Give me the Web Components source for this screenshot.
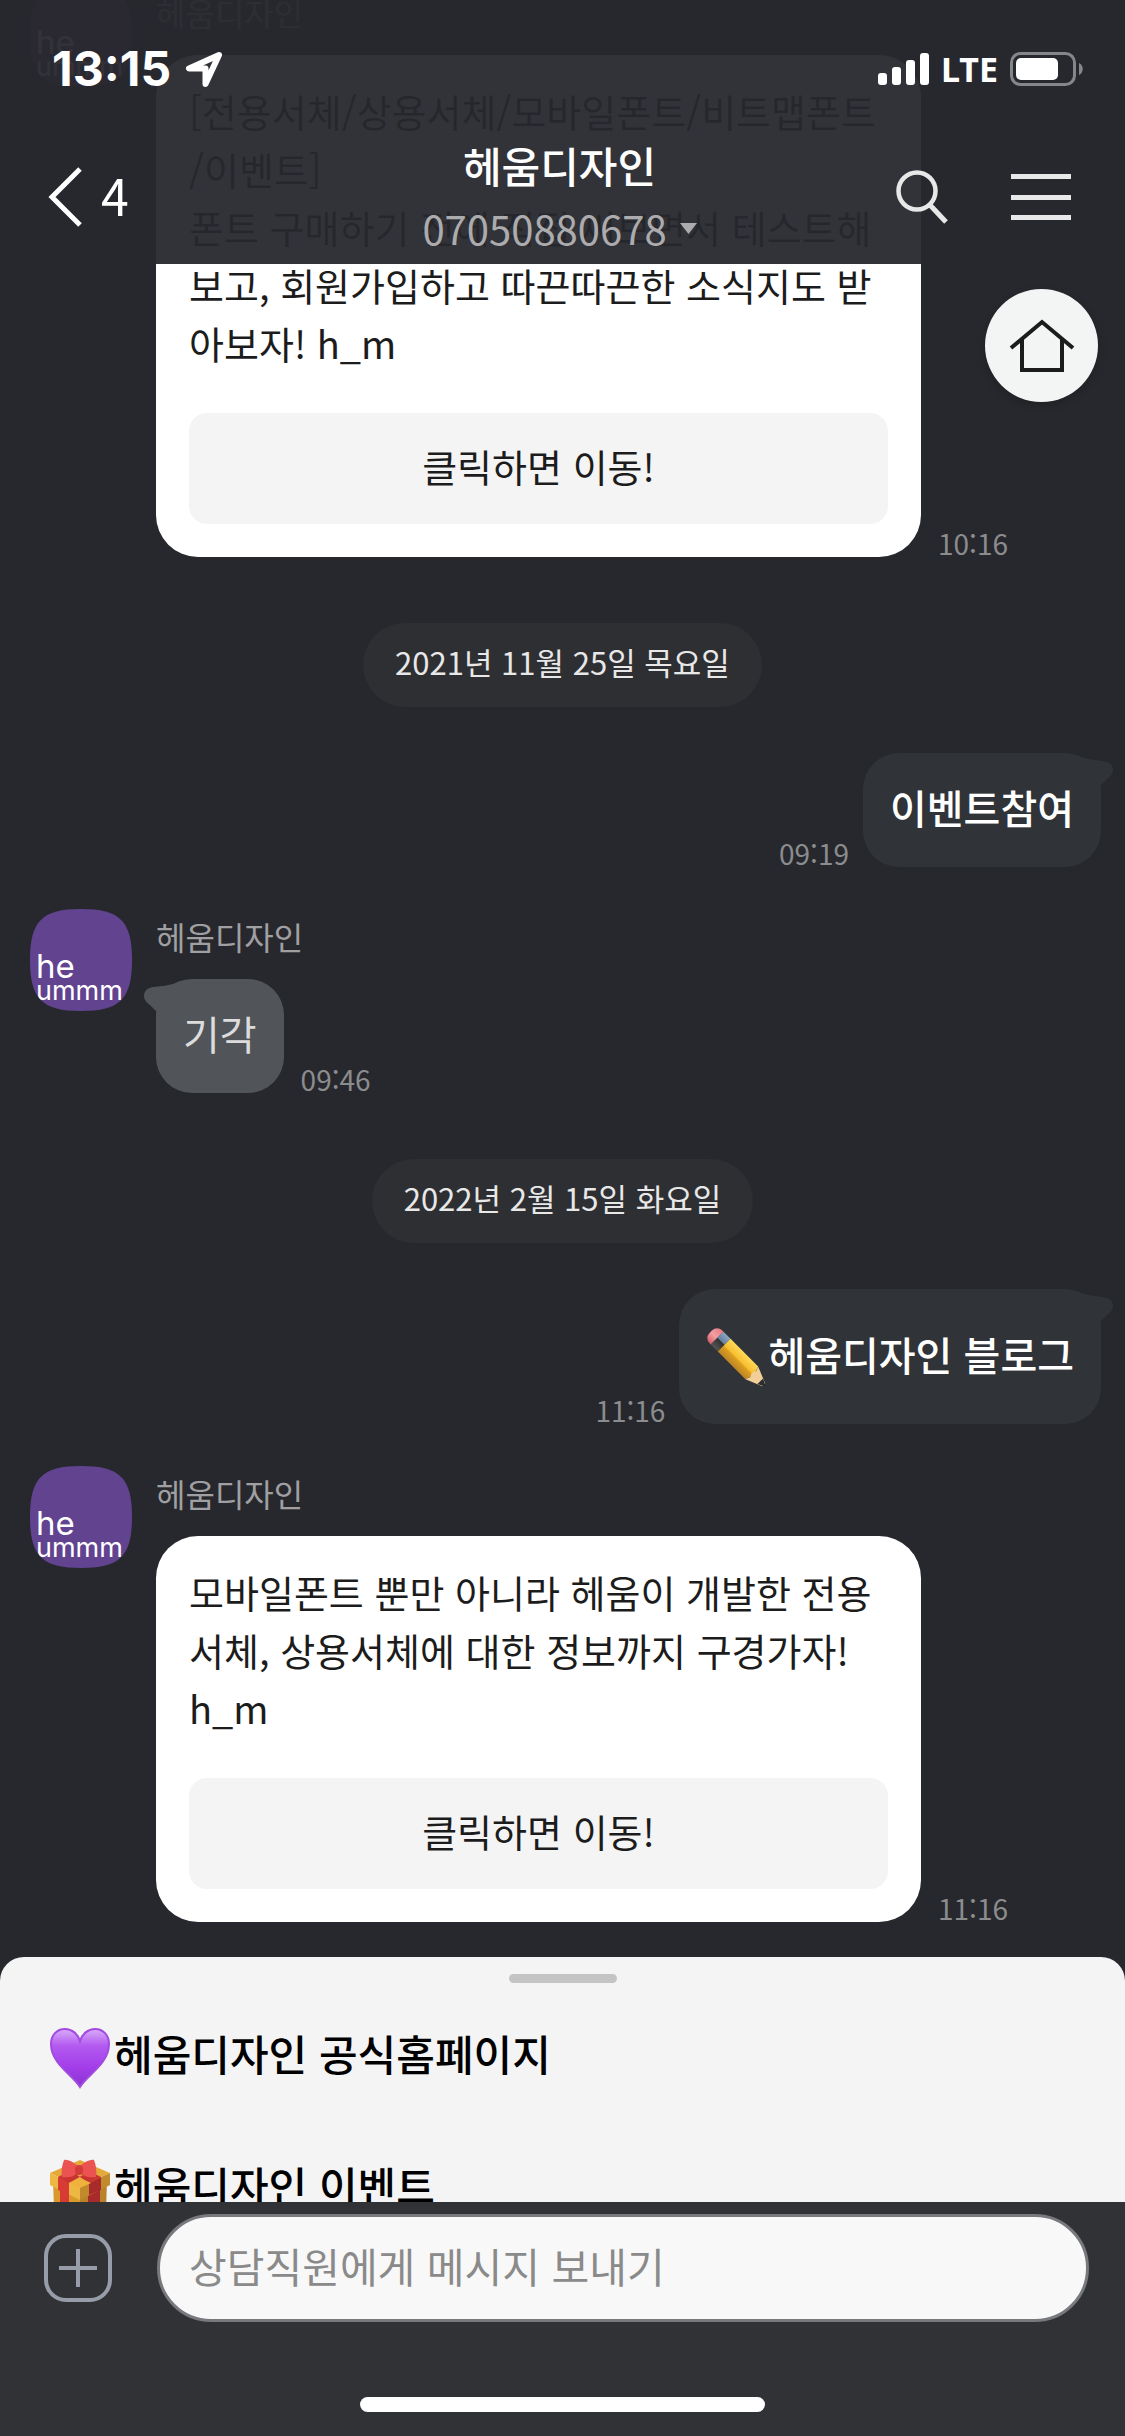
<!DOCTYPE html>
<html lang="ko">
<head>
<meta charset="utf-8">
<meta name="viewport" content="width=device-width, initial-scale=1">
<title>헤움디자인</title>
<style>
  body { margin: 0; background: #27282d; font-family: "Noto Sans CJK KR", "Noto Sans", sans-serif; }
</style>
</head>
<body>
<chat-app>
  <chat-header slot="header" count="4" name="헤움디자인" number="07050880678"></chat-header>

  <chat-received name="헤움디자인" time="10:16">
    <link-card action="클릭하면 이동!">[전용서체/상용서체/모바일폰트/비트맵폰트<wbr>/이벤트]<br>폰트 구매하기 전에 직접 써보면서 테스트해보고, 회원가입하고 따끈따끈한 소식지도 받아보자! h_m</link-card>
  </chat-received>
  <date-pill>2021년 11월 25일 목요일</date-pill>
  <chat-sent time="09:19">이벤트참여</chat-sent>
  <chat-received name="헤움디자인" time="09:46"><chat-bubble>기각</chat-bubble></chat-received>
  <date-pill>2022년 2월 15일 화요일</date-pill>
  <chat-sent time="11:16"><emoji-icon name="pencil"></emoji-icon>헤움디자인 블로그</chat-sent>
  <chat-received name="헤움디자인" time="11:16">
    <link-card action="클릭하면 이동!">모바일폰트 뿐만 아니라 헤움이 개발한 전용서체, 상용서체에 대한 정보까지 구경가자! h_m</link-card>
  </chat-received>

  <quick-sheet slot="footer">
    <quick-item icon="heart">헤움디자인 공식홈페이지</quick-item>
    <quick-item icon="gift">헤움디자인 이벤트</quick-item>
  </quick-sheet>
  <message-composer slot="footer" placeholder="상담직원에게 메시지 보내기"></message-composer>
</chat-app>

<script>
const BUTTON_RESET = `
  button { font: inherit; color: inherit; background: none; border: 0; padding: 0; margin: 0; display: flex; align-items: center; box-sizing: border-box; cursor: pointer; }
  svg { display: block; flex: none; }
`;

function define(tag, render) {
  customElements.define(tag, class extends HTMLElement {
    constructor() {
      super();
      this.attachShadow({ mode: 'open' });
    }
    connectedCallback() {
      const attr = name => this.getAttribute(name) || '';
      this.shadowRoot.innerHTML = render(attr);
    }
  });
}

define('chat-app', () => `
  <style>
    ${BUTTON_RESET}
    :host { display: flex; flex-direction: column; height: 100vh; position: relative; overflow: hidden; background: #27282d; }
    main { flex: 1; min-height: 0; overflow: hidden; display: flex; flex-direction: column; justify-content: flex-end; gap: 42px; padding-bottom: 35px; }
    header { position: absolute; inset: 0 0 auto 0; z-index: 2; }
    .home { position: absolute; z-index: 1; right: 27px; top: 289px; width: 113px; height: 113px; border-radius: 50%; background: #f3f4f4; justify-content: center; box-shadow: 0 3px 9px rgba(0, 0, 0, .2); }
    footer { flex: none; }
  </style>
  <header><slot name="header"></slot></header>
  <button class="home" aria-label="홈">
    <svg width="66" height="58" viewBox="0 0 66 58" fill="none" stroke="#1c1c1c" stroke-width="4"><path d="M2 31 33 5l31 26"/><path d="M13 22v31h40V22"/></svg>
  </button>
  <main><slot></slot></main>
  <footer><slot name="footer"></slot></footer>
`);

define('status-bar', () => `
  <style>
    :host { display: flex; align-items: center; height: 44px; padding: 47px 41px 0 52px; color: #fff; font-family: Inter, sans-serif; }
    svg { display: block; }
    .clock { font-size: 48px; font-weight: 700; line-height: 44px; }
    .arrow { margin-left: 14px; }
    .right { display: flex; align-items: center; gap: 12px; margin-left: auto; }
    .net { font-size: 34px; font-weight: 700; line-height: 44px; font-family: "Noto Sans", sans-serif; }
  </style>
  <time class="clock">13:15</time>
  <svg class="arrow" width="38" height="38" viewBox="0 0 38 38"><path d="M34 5 4 18.500H20.500V34Z" fill="none" stroke="#fff" stroke-width="6" stroke-linejoin="round"/></svg>
  <div class="right">
    <svg width="51" height="34" viewBox="0 0 51 34" fill="#fff"><rect y="21" width="9" height="12" rx="3"/><rect x="14" y="15" width="9" height="18" rx="3"/><rect x="28" y="8" width="9" height="25" rx="3"/><rect x="42" y="1" width="9" height="32" rx="3"/></svg>
    <span class="net">LTE</span>
    <svg width="74" height="34" viewBox="0 0 74 34"><rect x="1.500" y="1.500" width="63" height="31" rx="9" fill="none" stroke="#85868a" stroke-width="3"/><rect x="6" y="6" width="42" height="22" rx="5" fill="#fff"/><path d="M69 11c5 2 5 10 0 12z" fill="#85868a"/></svg>
  </div>
`);

define('chat-header', attr => `
  <style>
    ${BUTTON_RESET}
    :host { display: block; background: rgba(39, 40, 45, .95); color: #fff; }
    nav { display: grid; grid-template-columns: 1fr auto 1fr; align-items: center; height: 134px; padding: 39px 54px 0 48px; }
    .back { gap: 18px; font-size: 50px; line-height: 60px; }
    .back span { padding-bottom: 6px; }
    .middle { display: flex; flex-direction: column; align-items: center; }
    h1 { margin: 0; font-size: 42px; font-weight: 500; line-height: 62px; }
    .number { gap: 13px; font-size: 40px; line-height: 64px; color: #acacae; }
    .tools { display: flex; justify-content: flex-end; align-items: center; gap: 62px; }
  </style>
  <status-bar></status-bar>
  <nav>
    <button class="back" aria-label="뒤로">
      <svg width="35" height="60" viewBox="0 0 35 60" fill="none" stroke="#fff" stroke-width="5"><path d="M32 2 4 30l28 28"/></svg>
      <span>${attr('count')}</span>
    </button>
    <div class="middle">
      <h1>${attr('name')}</h1>
      <button class="number">${attr('number')}<svg width="17" height="11" viewBox="0 0 17 11" fill="#acacae"><path d="M0 0h17L8.500 11z"/></svg></button>
    </div>
    <div class="tools">
      <button aria-label="검색"><svg width="53" height="55" viewBox="0 0 53 55" fill="none" stroke="#e8e8e8" stroke-width="4.500"><circle cx="21" cy="21" r="18.500"/><path d="m34 35 16 17" stroke-width="5"/></svg></button>
      <button aria-label="메뉴"><svg width="60" height="48" viewBox="0 0 60 48" fill="#e8e8e8"><path d="M0 1h60v5H0zM0 22h60v5H0zM0 42h60v5H0z"/></svg></button>
    </div>
  </nav>
`);

define('profile-avatar', () => `
  <style>:host { display: block; flex: none; } svg { display: block; }</style>
  <svg width="102" height="102" viewBox="0 0 102 102">
    <defs><clipPath id="c"><path d="M51 0C90 0 102 12 102 51S90 102 51 102 0 90 0 51 12 0 51 0Z"/></clipPath></defs>
    <g clip-path="url(#c)">
      <rect width="102" height="102" fill="#614390"/>
      <g fill="#fff" font-family="Inter, sans-serif" font-weight="400"><text x="6" y="69" font-size="33">he</text><text x="6" y="91" font-size="27">ummm</text></g>
    </g>
  </svg>
`);

define('chat-received', attr => `
  <style>
    :host { display: flex; flex: none; align-items: flex-start; gap: 24px; padding-left: 30px; }
    .name { font-size: 32px; line-height: 54px; margin-bottom: 16px; color: #a0a0a2; }
    .line { display: flex; align-items: flex-end; gap: 17px; }
    time { font-size: 28px; line-height: 28px; color: #8b8c8e; }
  </style>
  <profile-avatar></profile-avatar>
  <div>
    <div class="name">${attr('name')}</div>
    <div class="line"><slot></slot><time>${attr('time')}</time></div>
  </div>
`);

define('chat-sent', attr => `
  <style>
    :host { display: flex; flex: none; justify-content: flex-end; align-items: flex-end; gap: 14px; padding-right: 24px; }
    time { font-size: 28px; line-height: 28px; color: #8b8c8e; }
    ::slotted(emoji-icon) { padding: 17px 0 8px; }
  </style>
  <time>${attr('time')}</time>
  <chat-bubble side="right"><slot></slot></chat-bubble>
`);

define('chat-bubble', () => `
  <style>
    :host { display: flex; align-items: center; position: relative; box-sizing: border-box; padding: 24px 27px; border-radius: 36px; font-size: 40px; line-height: 60px; background: var(--bubble); color: #dcdcdc; --bubble: #515459; padding: 21px 27px 27px; min-height: 114px; }
    :host([side="right"]) { --bubble: #303337; color: #fff; font-weight: 500; }
    svg { position: absolute; top: 0; left: -12px; fill: var(--bubble); }
    :host([side="right"]) svg { left: auto; right: -12px; transform: scaleX(-1); }
  </style>
  <svg width="48" height="36" viewBox="0 0 48 36" aria-hidden="true"><path d="M36 2C26 7 18 7 9 8 3 9 0 12 0 17c0 4 3 7 6 9l6 6h24z"/></svg>
  <slot></slot>
`);

define('link-card', attr => `
  <style>
    ${BUTTON_RESET}
    :host { display: block; box-sizing: border-box; width: 68vw; padding: 27px 33px 33px; border-radius: 42px; background: #fff; color: #1c1c1c; font-size: 38px; line-height: 58px; }
    button { width: 100%; height: 111px; margin-top: 41px; padding-bottom: 6px; justify-content: center; border-radius: 18px; background: #f4f4f4; }
  </style>
  <slot></slot>
  <button>${attr('action')}</button>
`);

define('date-pill', () => `
  <style>:host { display: block; flex: none; align-self: center; margin: 24px 0 4px; padding: 0 32px 6px; border-radius: 42px; background: #2e2f32; color: #e8e8e8; font-size: 31px; line-height: 78px; }</style>
  <slot></slot>
`);

const EMOJI = {
  pencil: `
    <defs>
      <linearGradient id="wood" x1="0" y1="0" x2="0" y2="1"><stop offset="0" stop-color="#ffd95a"/><stop offset=".5" stop-color="#f6bd2d"/><stop offset=".55" stop-color="#dfa021"/><stop offset="1" stop-color="#b98424"/></linearGradient>
      <linearGradient id="metal" x1="0" y1="0" x2="0" y2="1"><stop offset="0" stop-color="#8ea6c4"/><stop offset=".45" stop-color="#67809f"/><stop offset=".5" stop-color="#333"/><stop offset="1" stop-color="#555"/></linearGradient>
      <linearGradient id="rubber" x1="0" y1="0" x2="0" y2="1"><stop offset="0" stop-color="#e87a84"/><stop offset=".5" stop-color="#f3a0a4"/><stop offset="1" stop-color="#d35c68"/></linearGradient>
    </defs>
    <g transform="translate(9 9) rotate(45)">
      <path d="M0-9h-2a7 7 0 0 0-7 7v4a7 7 0 0 0 7 7h2z" transform="translate(3 0)" fill="url(#rubber)"/>
      <rect x="3" y="-9" width="10" height="18" fill="url(#metal)"/>
      <path d="M13-9h39l3 9-3 9H13z" fill="url(#wood)"/>
      <path d="M52-9 69-2v4L52 9l2-5-2-4 2-4z" fill="#f2cf98"/>
      <path d="M64-4 72 0l-8 4z" fill="#2b2d31"/>
    </g>`,
  heart: `
    <defs>
      <linearGradient id="h" x1="0" y1="0" x2="0" y2="1"><stop offset="0" stop-color="#d9adf8"/><stop offset=".28" stop-color="#b45bf0"/><stop offset=".65" stop-color="#a33eea"/><stop offset="1" stop-color="#8a35d0"/></linearGradient>
    </defs>
    <path d="M31 60C24 48 2 37 2 17 2 8 8 2 16 2c7 0 13 5 15 12C33 7 39 2 46 2c8 0 14 6 14 15 0 20-22 31-29 43Z" fill="url(#h)" stroke="#a24be0" stroke-width="2"/>`,
  gift: `
    <path d="M4 20 31 32v32L5 52z" fill="#d99a2b"/>
    <path d="M58 20 31 32v32l26-12z" fill="#b9822a"/>
    <path d="M11 22l9 5v34l-9-5z" fill="#d83a34"/>
    <path d="M39 29l12-6v32l-12 6z" fill="#a92a2a"/>
    <path d="M1 14 31 1l30 13-30 14z" fill="#e5a93a"/>
    <path d="M1 14 31 28v13L1 26z" fill="#eeb744"/>
    <path d="M61 14 31 28v13l30-15z" fill="#c18a2c"/>
    <path d="M9 18l11 5v13l-11-5z" fill="#d83a34"/>
    <path d="M40 24l12-6v13l-12 5z" fill="#a92a2a"/>
    <path d="M9 18 22 11l12 5-14 8zM52 18 38 11l-10 5 12 8z" fill="#c93430"/>
    <path d="M31 19l11 5-11 5-11-5z" fill="#f0b23c"/>
    <path d="M29 7C23 2 18 0 15 1c-2 5-3 11-2 17 6 1 12 0 16-5zM31 7c6-5 11-7 14-6 2 5 3 11 2 17-6 1-12 0-16-5z" fill="#ea5350"/>
    <rect x="26" y="6" width="8" height="10" rx="4" fill="#d43c3c"/>`,
};

define('emoji-icon', attr => `
  <style>:host { display: block; flex: none; } svg { display: block; overflow: visible; }</style>
  <svg width="62" height="62" viewBox="0 0 62 62" aria-hidden="true">${EMOJI[attr('name')]}</svg>
`);

define('quick-item', attr => `
  <style>
    ${BUTTON_RESET}
    :host { display: block; }
    button { width: 100%; height: 132px; padding: 0 0 6px 49px; gap: 3px; font-size: 42px; font-weight: 500; color: #000; }
    emoji-icon { padding-top: 12px; }
  </style>
  <button><emoji-icon name="${attr('icon')}"></emoji-icon><slot></slot></button>
`);

define('quick-sheet', () => `
  <style>
    :host { display: block; box-sizing: border-box; height: 245px; overflow: hidden; padding-top: 17px; border-radius: 24px 24px 0 0; background: #f4f4f4; }
    .handle { width: 108px; height: 9px; margin: 0 auto 6px; border-radius: 5px; background: #c4c4c4; }
  </style>
  <div class="handle"></div>
  <slot></slot>
`);

define('message-composer', attr => `
  <style>
    ${BUTTON_RESET}
    :host { display: block; padding: 12px 0 24px; background: #303236; }
    form { display: flex; align-items: center; gap: 45px; padding: 0 36px 0 44px; margin: 0 0 75px; }
    input { flex: 1; min-width: 0; box-sizing: border-box; height: 108px; margin: 0; padding: 0 29px 6px; border: 3px solid #77797c; border-radius: 54px; background: #f8f8f8; font: inherit; font-size: 41px; color: #1c1c1c; outline: 0; }
    input::placeholder { color: #8a8a8a; opacity: 1; }
    .bar { width: 36%; height: 15px; margin: 0 auto; border-radius: 8px; background: #fff; }
  </style>
  <form>
    <button type="button" aria-label="첨부">
      <svg width="68" height="68" viewBox="0 0 68 68" fill="none" stroke="#969da8" stroke-width="4"><rect x="2" y="2" width="64" height="64" rx="20"/><path d="M34 15v38M15 34h38"/></svg>
    </button>
    <input type="text" aria-label="${attr('placeholder')}" placeholder="${attr('placeholder')}">
  </form>
  <div class="bar"></div>
`);
</script>
</body>
</html>
